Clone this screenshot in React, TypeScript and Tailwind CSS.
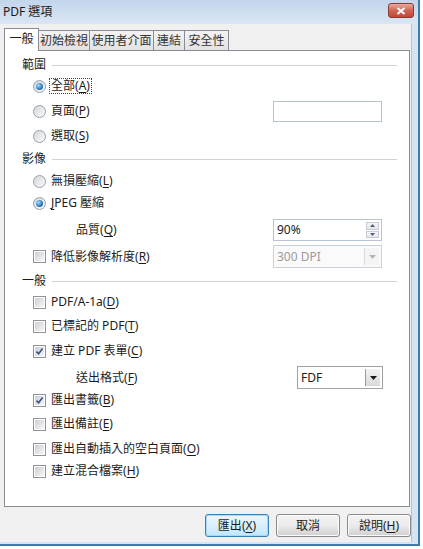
import React from "react";

const FONT = "font-['Noto_Sans','Noto_Sans_CJK_TC',sans-serif]";

function Key({ t, k }: { t: string; k?: string }) {
  return (
    <span className="whitespace-nowrap">
      {t}
      {k && (
        <>
          (<span className="underline underline-offset-2">{k}</span>)
        </>
      )}
    </span>
  );
}

function Radio({ checked }: { checked?: boolean }) {
  return (
    <span className="w-[13px] h-[13px] shrink-0 rounded-full border border-[#9aa0a8] bg-linear-to-br from-[#d3d6db] to-[#fbfbfc] flex items-center justify-center">
      {checked && (
        <span className="w-[7px] h-[7px] rounded-full bg-[radial-gradient(circle_at_35%_35%,#a6dcfa,#2a79bd_60%,#144f8a)]" />
      )}
    </span>
  );
}

function Check({ checked }: { checked?: boolean }) {
  return (
    <span className="w-[13px] h-[13px] shrink-0 border border-[#8f9297] bg-white p-[1px]">
      <span className="relative block w-full h-full bg-linear-to-br from-[#cbced3] to-[#f6f6f7]">
        {checked && (
          <svg viewBox="0 0 9 9" className="absolute inset-0 w-[9px] h-[9px]">
            <path d="M1.5 4.6 L3.6 6.8 L7.6 1.6" fill="none" stroke="#3b4f8c" strokeWidth="1.6" />
          </svg>
        )}
      </span>
    </span>
  );
}

function Heading({ text, mt }: { text: string; mt: string }) {
  return (
    <div className={`flex items-center h-[20px] pl-[17px] pr-[12px] ${mt}`}>
      <span>{text}</span>
      <span className="flex-1 ml-[6px] h-px bg-[#cfd2d6]" />
    </div>
  );
}

function DropArrow({ disabled }: { disabled?: boolean }) {
  return (
    <span
      className={`w-[15px] h-full border-l ${
        disabled ? "border-[#d6dbe1] bg-[#f4f4f4]" : "border-[#9c9c9c] bg-linear-to-b from-[#f3f3f3] to-[#d9d9d9]"
      } flex items-center justify-center`}
    >
      <svg viewBox="0 0 7 4" className="w-[7px] h-[4px]">
        <path d="M0 0 H7 L3.5 4 Z" fill={disabled ? "#b5b5b5" : "#1a1a1a"} />
      </svg>
    </span>
  );
}

export default function App() {
  return (
    <div className={`w-[423px] h-[549px] bg-white overflow-hidden text-[12px] leading-none text-[#1c1c1c] ${FONT}`}>
      <div className="w-[420px] h-[546px] flex flex-col border-r-2 border-b-2 border-[#3f7cab] bg-[#d6e3f2]">
        {/* title bar */}
        <div className="h-[24px] shrink-0 flex items-center pl-[3px] pr-[4px] bg-linear-to-b from-[#c3d5eb] to-[#dae6f4]">
          <span className="text-[12px] text-[#1a1a1a]">PDF 選項</span>
          <span className="ml-auto mb-[3px] w-[26px] h-[15px] rounded-[3px] border border-[#8b3a30] bg-linear-to-b from-[#e7aba1] via-[#d06556] to-[#c2463a] flex items-center justify-center">
            <svg viewBox="0 0 10 8" className="w-[10px] h-[8px]">
              <path d="M1.5 1 L8.5 7 M8.5 1 L1.5 7" stroke="#ffffff" strokeWidth="2" />
            </svg>
          </span>
        </div>

        {/* client area */}
        <div className="flex-1 mr-[6px] mb-[2px] bg-[#f0f0f0] flex flex-col pt-[4px] border-r border-[#b4c4d6]">
          {/* tabs */}
          <div className="h-[22px] flex items-end pl-[4px] relative z-10">
            <div className="w-[35px] h-[23px] mb-[-1px] bg-white border border-b-0 border-[#898c95] flex items-center justify-center pb-[2px]">
              一般
            </div>
            <div className="w-[52px] h-[20px] -ml-px border border-b-0 border-[#898c95] bg-linear-to-b from-[#f3f3f3] to-[#e2e2e2] flex items-center justify-center text-[#333]">
              初始檢視
            </div>
            <div className="w-[65px] h-[20px] -ml-px border border-b-0 border-[#898c95] bg-linear-to-b from-[#f3f3f3] to-[#e2e2e2] flex items-center justify-center text-[#333]">
              使用者介面
            </div>
            <div className="w-[32px] h-[20px] -ml-px border border-b-0 border-[#898c95] bg-linear-to-b from-[#f3f3f3] to-[#e2e2e2] flex items-center justify-center text-[#333]">
              連結
            </div>
            <div className="w-[45px] h-[20px] -ml-px border border-b-0 border-[#898c95] bg-linear-to-b from-[#f3f3f3] to-[#e2e2e2] flex items-center justify-center text-[#333]">
              安全性
            </div>
          </div>

          {/* tab page */}
          <div className="ml-[4px] mr-[1px] h-[457px] bg-white border border-[#898c95] flex flex-col">
            <Heading text="範圍" mt="mt-[4px]" />
            <div className="flex items-center h-[22px] pl-[28px]">
              <Radio checked />
              <span className="ml-[3px] px-[1px] py-[1px] border border-dotted border-[#444]">
                <Key t="全部" k="A" />
              </span>
            </div>
            <div className="flex items-center h-[22px] pl-[28px] pr-[27px] mt-[3px]">
              <Radio />
              <span className="ml-[5px]">
                <Key t="頁面" k="P" />
              </span>
              <span className="ml-auto w-[109px] h-[21px] border border-[#b7c3d0] bg-white" />
            </div>
            <div className="flex items-center h-[22px] pl-[28px] mt-[3px]">
              <Radio />
              <span className="ml-[5px]">
                <Key t="選取" k="S" />
              </span>
            </div>

            <Heading text="影像" mt="mt-[2px]" />
            <div className="flex items-center h-[22px] pl-[28px] mt-[1px]">
              <Radio />
              <span className="ml-[5px]">
                <Key t="無損壓縮" k="L" />
              </span>
            </div>
            <div className="flex items-center h-[22px] pl-[28px]">
              <Radio checked />
              <span className="ml-[5px] whitespace-nowrap">
                <span className="underline underline-offset-2">J</span>PEG 壓縮
              </span>
            </div>
            <div className="flex items-center h-[22px] pl-[71px] pr-[27px] mt-[5px]">
              <Key t="品質" k="Q" />
              <span className="ml-auto w-[109px] h-[22px] border border-[#b7c3d0] bg-white flex items-center">
                <span className="flex-1 pl-[3px]">90%</span>
                <span className="w-[13px] h-full flex flex-col gap-px py-[2px] mr-[2px]">
                  <span className="flex-1 border border-[#c5cbd3] bg-linear-to-b from-[#f6f6f6] to-[#e4e6ea] flex items-center justify-center">
                    <svg viewBox="0 0 5 3" className="w-[5px] h-[3px]">
                      <path d="M0 3 H5 L2.5 0 Z" fill="#4d5d7d" />
                    </svg>
                  </span>
                  <span className="flex-1 border border-[#c5cbd3] bg-linear-to-b from-[#f6f6f6] to-[#e4e6ea] flex items-center justify-center">
                    <svg viewBox="0 0 5 3" className="w-[5px] h-[3px]">
                      <path d="M0 0 H5 L2.5 3 Z" fill="#4d5d7d" />
                    </svg>
                  </span>
                </span>
              </span>
            </div>
            <div className="flex items-center h-[23px] pl-[28px] pr-[27px] mt-[4px]">
              <Check />
              <span className="ml-[5px]">
                <Key t="降低影像解析度" k="R" />
              </span>
              <span className="ml-auto w-[109px] h-[23px] border border-[#c9d1da] bg-[#fafafa] flex items-center p-[2px]">
                <span className="flex-1 pl-[1px] text-[#9b9b9b]">300 DPI</span>
                <DropArrow disabled />
              </span>
            </div>

            <Heading text="一般" mt="mt-[3px]" />
            <div className="flex items-center h-[22px] pl-[28px]">
              <Check />
              <span className="ml-[5px]">
                <Key t="PDF/A-1a" k="D" />
              </span>
            </div>
            <div className="flex items-center h-[22px] pl-[28px] mt-[2px]">
              <Check />
              <span className="ml-[5px]">
                <Key t="已標記的 PDF" k="T" />
              </span>
            </div>
            <div className="flex items-center h-[22px] pl-[28px] mt-[3px]">
              <Check checked />
              <span className="ml-[5px]">
                <Key t="建立 PDF 表單" k="C" />
              </span>
            </div>
            <div className="flex items-center h-[23px] pl-[71px] pr-[26px] mt-[4px]">
              <Key t="送出格式" k="F" />
              <span className="ml-auto w-[86px] h-[23px] border border-[#9fa3a8] bg-white flex items-center p-[2px]">
                <span className="flex-1 pl-[1px]">FDF</span>
                <DropArrow />
              </span>
            </div>
            <div className="flex items-center h-[22px] pl-[28px]">
              <Check checked />
              <span className="ml-[5px]">
                <Key t="匯出書籤" k="B" />
              </span>
            </div>
            <div className="flex items-center h-[22px] pl-[28px] mt-[2px]">
              <Check />
              <span className="ml-[5px]">
                <Key t="匯出備註" k="E" />
              </span>
            </div>
            <div className="flex items-center h-[22px] pl-[28px] mt-[3px]">
              <Check />
              <span className="ml-[5px]">
                <Key t="匯出自動插入的空白頁面" k="O" />
              </span>
            </div>
            <div className="flex items-center h-[22px] pl-[28px]">
              <Check />
              <span className="ml-[5px]">
                <Key t="建立混合檔案" k="H" />
              </span>
            </div>
          </div>

          {/* dialog buttons */}
          <div className="flex justify-end gap-[7px] mt-[7px]">
            <button className="w-[64px] h-[23px] rounded-[3px] border border-[#3c7fb1] bg-linear-to-b from-[#eaf6fd] via-[#d9f0fc] to-[#bee6fd] shadow-[inset_0_0_0_1px_#a7d9f5] flex items-center justify-center">
              <Key t="匯出" k="X" />
            </button>
            <button className="w-[64px] h-[23px] rounded-[3px] border border-[#8a8a8a] bg-linear-to-b from-[#f2f2f2] via-[#ebebeb] to-[#cfcfcf] shadow-[inset_0_0_0_1px_#fcfcfc] flex items-center justify-center">
              取消
            </button>
            <button className="w-[64px] h-[23px] rounded-[3px] border border-[#8a8a8a] bg-linear-to-b from-[#f2f2f2] via-[#ebebeb] to-[#cfcfcf] shadow-[inset_0_0_0_1px_#fcfcfc] flex items-center justify-center">
              <Key t="說明" k="H" />
            </button>
          </div>
        </div>
      </div>
    </div>
  );
}
